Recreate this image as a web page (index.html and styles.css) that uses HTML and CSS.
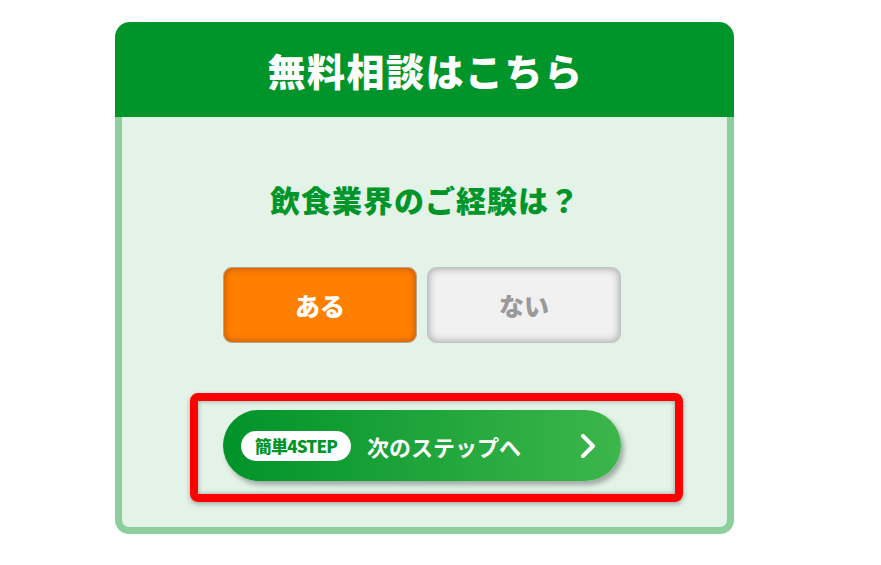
FILE: index.html
```html
<!DOCTYPE html>
<html lang="ja">

<head>
  <meta charset="UTF-8">
  <meta name="viewport" content="width=device-width, initial-scale=1.0">
  <title>無料相談はこちら</title>
  <link rel="stylesheet" href="styles.css">
</head>

<body>
  <div class="card">

    <div class="card-head">
      <h1>無料相談はこちら</h1>
    </div>

    <div class="card-body">
      <p class="question">飲食業界のご経験は？</p>

      <div class="choices">
        <button class="choice choice-yes">ある</button>
        <button class="choice choice-no">ない</button>
      </div>

      <div class="next-wrapper">
        <button class="next">
          <span class="badge">簡単4STEP</span>
          <span class="next-label">次のステップへ</span>
          <svg class="chevron" width="16" height="24" viewBox="0 0 16 24">
            <polyline points="3,2 13,12 3,22" fill="none" stroke="#fff" stroke-width="4" stroke-linecap="round" stroke-linejoin="round" />
          </svg>
        </button>
        <div class="highlight"></div>
      </div>
    </div>
  </div>
</body>

</html>
```

FILE: styles.css
```css
* {
  margin: 0;
  padding: 0;
  box-sizing: border-box;
  font-family: "Noto Sans CJK JP", "Noto Sans", sans-serif;
}

body {
  background: #fff;
}

.card {
  width: 619px;
  margin: 22px 0 0 115px;
}

.card-head {
  height: 95px;
  background: #00952a;
  border-radius: 15px 15px 0 0;
  display: flex;
  justify-content: center;
  align-items: center;
}

.card-head h1 {
  color: #fff;
  font-size: 38px;
  font-weight: 900;
  letter-spacing: 1.5px;
  line-height: 1;
  padding-left: 2px;
}

.card-body {
  height: 417px;
  background: #e3f3e8;
  border: 7px solid #8dcf9c;
  border-top: none;
  border-radius: 0 0 14px 14px;
  padding: 64px 5px 0 0;
  display: flex;
  flex-direction: column;
  align-items: center;
}

.question {
  color: #00952a;
  font-size: 30px;
  font-weight: 900;
  letter-spacing: 1px;
  line-height: 36px;
  padding-left: 6px;
}

.choices {
  display: flex;
  gap: 10px;
  margin-top: 50px;
}

.choice {
  width: 194px;
  height: 76px;
  border-radius: 9px;
  font-size: 25px;
  font-weight: 900;
  cursor: pointer;
}

.choice-yes {
  background: #ff7f00;
  color: #fff;
  border: 1px solid #b9a58f;
  box-shadow: inset 0 0 7px rgba(160, 70, 0, 0.8);
}

.choice-no {
  background: #f1f1f1;
  color: #9a9a9a;
  border: 1px solid #c3c3c3;
  box-shadow: inset 0 0 9px rgba(0, 0, 0, 0.35);
}

.next-wrapper {
  position: relative;
  margin-top: 67px;
}

.next {
  width: 398px;
  height: 71px;
  border: none;
  border-radius: 36px;
  background: linear-gradient(90deg, #00932a, #3db64b);
  box-shadow: 3px 4px 5px rgba(0, 0, 0, 0.3);
  display: flex;
  align-items: center;
  padding: 0 25px 0 18px;
  cursor: pointer;
}

.badge {
  width: 110px;
  height: 30px;
  border-radius: 15px;
  background: #fff;
  color: #00952a;
  font-size: 17px;
  font-weight: 900;
  letter-spacing: -0.8px;
  display: flex;
  justify-content: center;
  align-items: center;
}

.next-label {
  margin-left: 16px;
  color: #fff;
  font-size: 22px;
  font-weight: 700;
  flex: 1;
  text-align: left;
}

.chevron {
  display: block;
}

.highlight {
  position: absolute;
  top: -17px;
  left: -33px;
  right: -62px;
  bottom: -21px;
  border: 8px solid #ff0000;
  border-radius: 8px;
  box-shadow: 0 2px 5px rgba(0, 0, 0, 0.3), inset 0 0 5px rgba(0, 0, 0, 0.35);
  pointer-events: none;
}
```
